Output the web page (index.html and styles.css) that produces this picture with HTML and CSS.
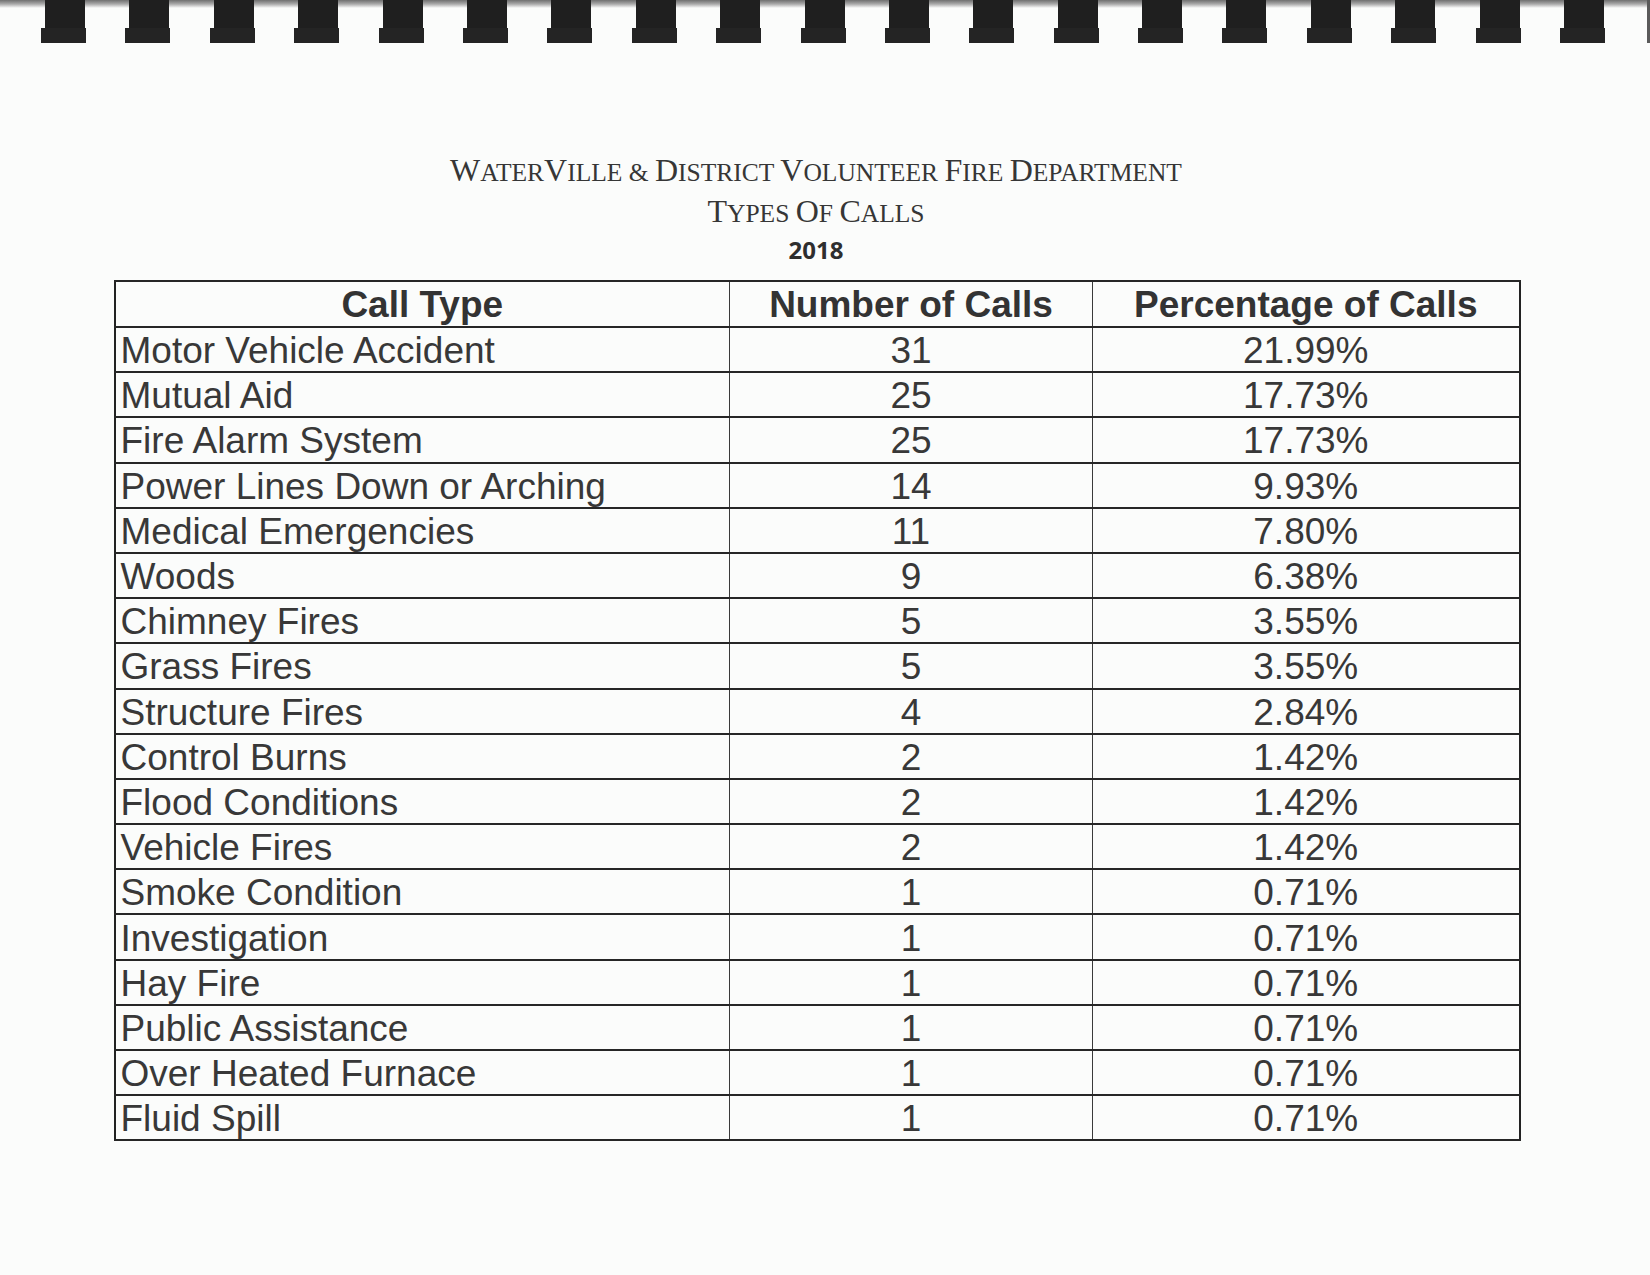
FILE: index.html
```html
<!DOCTYPE html>
<html lang="en">
<head>
<meta charset="utf-8">
<title>Waterville &amp; District Volunteer Fire Department - Types of Calls 2018</title>
<link rel="stylesheet" href="styles.css">
</head>
<body>
<div class="page">
  <div class="binding">
    <span class="tab"></span><span class="tab"></span><span class="tab"></span><span class="tab"></span><span class="tab"></span>
    <span class="tab"></span><span class="tab"></span><span class="tab"></span><span class="tab"></span><span class="tab"></span>
    <span class="tab"></span><span class="tab"></span><span class="tab"></span><span class="tab"></span><span class="tab"></span>
    <span class="tab"></span><span class="tab"></span><span class="tab"></span><span class="tab"></span>
  </div>

  <header class="heading">
    <div class="title-line"><span class="ini">W</span>ATER<span class="ini">V</span>ILLE &amp; <span class="ini">D</span>ISTRICT <span class="ini">V</span>OLUNTEER <span class="ini">F</span>IRE <span class="ini">D</span>EPARTMENT</div>
    <div class="title-line"><span class="ini">T</span>YPES <span class="ini">O</span>F <span class="ini">C</span>ALLS</div>
    <div class="year">2018</div>
  </header>

  <table class="calls">
    <colgroup>
      <col class="col-type">
      <col class="col-num">
      <col class="col-pct">
    </colgroup>
    <thead>
      <tr><th>Call Type</th><th>Number of Calls</th><th>Percentage of Calls</th></tr>
    </thead>
    <tbody>
      <tr><td>Motor Vehicle Accident</td><td class="c">31</td><td class="c">21.99%</td></tr>
      <tr><td>Mutual Aid</td><td class="c">25</td><td class="c">17.73%</td></tr>
      <tr><td>Fire Alarm System</td><td class="c">25</td><td class="c">17.73%</td></tr>
      <tr><td>Power Lines Down or Arching</td><td class="c">14</td><td class="c">9.93%</td></tr>
      <tr><td>Medical Emergencies</td><td class="c">11</td><td class="c">7.80%</td></tr>
      <tr><td>Woods</td><td class="c">9</td><td class="c">6.38%</td></tr>
      <tr><td>Chimney Fires</td><td class="c">5</td><td class="c">3.55%</td></tr>
      <tr><td>Grass Fires</td><td class="c">5</td><td class="c">3.55%</td></tr>
      <tr><td>Structure Fires</td><td class="c">4</td><td class="c">2.84%</td></tr>
      <tr><td>Control Burns</td><td class="c">2</td><td class="c">1.42%</td></tr>
      <tr><td>Flood Conditions</td><td class="c">2</td><td class="c">1.42%</td></tr>
      <tr><td>Vehicle Fires</td><td class="c">2</td><td class="c">1.42%</td></tr>
      <tr><td>Smoke Condition</td><td class="c">1</td><td class="c">0.71%</td></tr>
      <tr><td>Investigation</td><td class="c">1</td><td class="c">0.71%</td></tr>
      <tr><td>Hay Fire</td><td class="c">1</td><td class="c">0.71%</td></tr>
      <tr><td>Public Assistance</td><td class="c">1</td><td class="c">0.71%</td></tr>
      <tr><td>Over Heated Furnace</td><td class="c">1</td><td class="c">0.71%</td></tr>
      <tr><td>Fluid Spill</td><td class="c">1</td><td class="c">0.71%</td></tr>
    </tbody>
  </table>
</div>
</body>
</html>
```

FILE: styles.css
```css
html, body {
  margin: 0;
  padding: 0;
  background: #fbfcfb;
}

.page {
  width: 1650px;
  height: 1275px;
  overflow: hidden;
  background: #fbfcfb;
}

/* spiral binding tabs at the top edge */
.binding {
  height: 43px;
  display: flex;
  gap: 39.4px;
  padding-left: 41px;
  background: linear-gradient(#707070 0, #a9a9a9 4px, rgba(255,255,255,0) 8px);
  border-right: 3px solid #5a5a5a;
  box-sizing: border-box;
}

.tab {
  width: 45px;
  height: 43px;
  display: flex;
  flex-direction: column;
  flex: none;
}

.tab::before {
  content: "";
  display: block;
  width: 40px;
  height: 28px;
  margin-left: 4px;
  background: #1f1f1f;
}

.tab::after {
  content: "";
  display: block;
  width: 45px;
  height: 15px;
  background: #242424;
}

/* heading */
.heading {
  width: 1405px;
  margin: 107px 0 0 113.5px;
  text-align: center;
  color: #363636;
}

.title-line {
  font-family: "Liberation Serif", "Times New Roman", serif;
  font-size: 25.5px;
  line-height: 41px;
  height: 41px;
}

.title-line .ini {
  font-size: 32px;
}

.year {
  font-family: "Open Sans", "Liberation Sans", sans-serif;
  font-weight: 700;
  font-size: 24px;
  line-height: 36px;
  height: 36px;
  color: #2e2e2e;
}

/* table */
.calls {
  margin: 12px 0 0 113.5px;
  width: 1405px;
  table-layout: fixed;
  border-collapse: collapse;
  border: 2px solid #222;
  font-family: "Liberation Sans", Arial, sans-serif;
  font-size: 37px;
  color: #383838;
}

.col-type { width: 615px; }
.col-num { width: 363px; }
.col-pct { width: 427px; }

.calls th,
.calls td {
  border-top: 2px solid #262626;
  border-bottom: 2px solid #262626;
  border-left: 1px solid #3a3a3a;
  border-right: 1px solid #3a3a3a;
  padding: 0 5px;
  line-height: 41px;
  white-space: nowrap;
}

.calls thead tr { height: 46px; }
.calls tbody tr { height: 45.2px; }

.calls th {
  font-weight: 700;
  text-align: center;
  color: #333;
}

.calls td {
  text-align: left;
  padding-top: 3px;
  line-height: 40px;
}
.calls td.c { text-align: center; }
```
